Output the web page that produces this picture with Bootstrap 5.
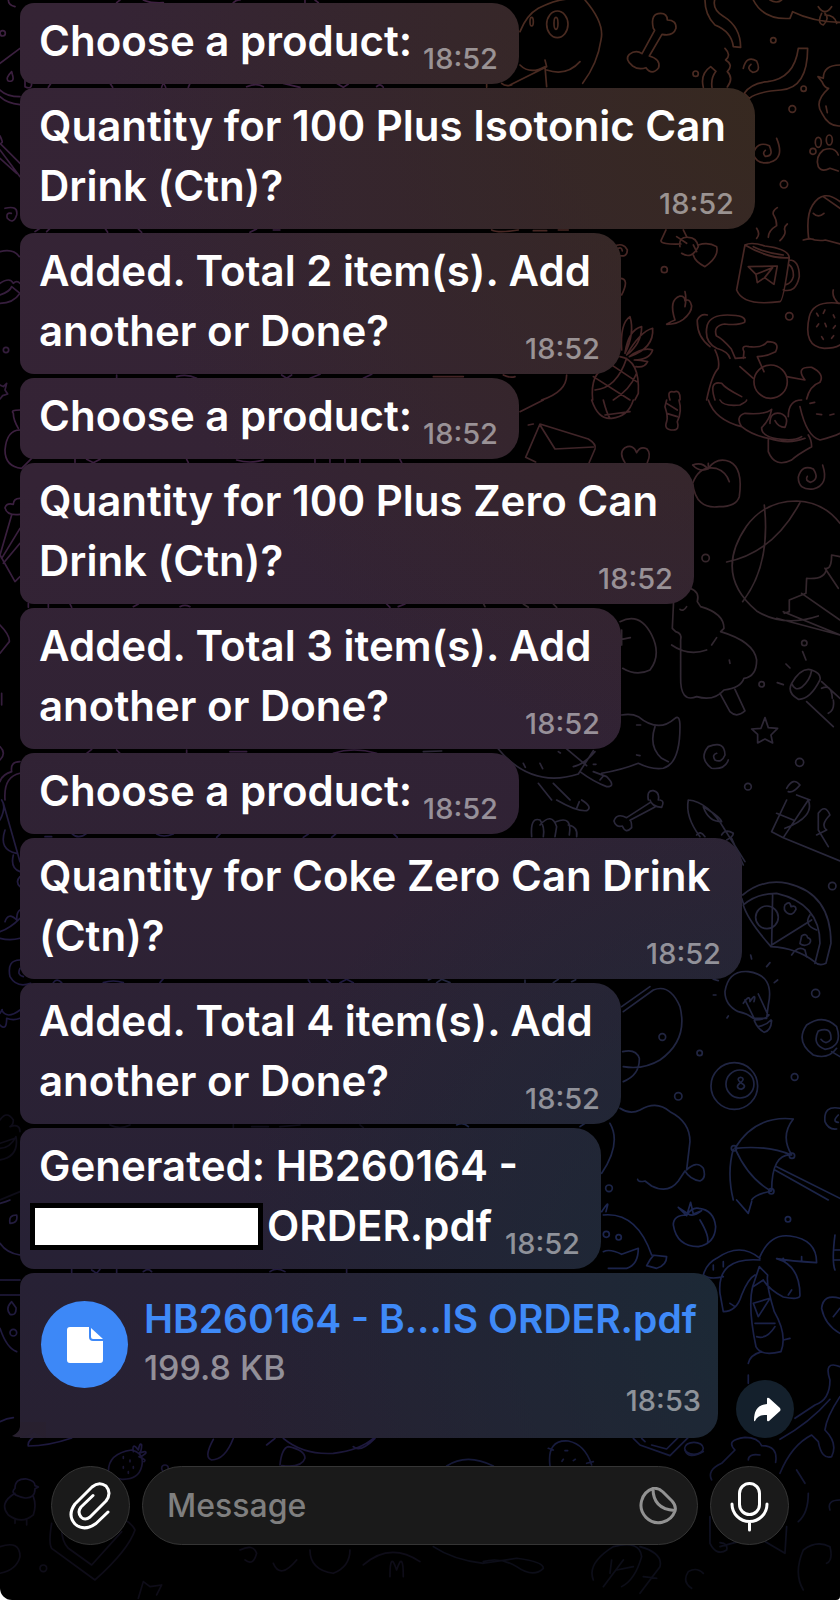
<!DOCTYPE html>
<html lang="en">
<head>
<meta charset="utf-8">
<meta name="viewport" content="width=device-width, initial-scale=1">
<title>Order bot chat</title>
<link href="https://cdn.jsdelivr.net/npm/bootstrap@5.3.0/dist/css/bootstrap.min.css" rel="stylesheet">
<style>
  body { background: #fff; font-family: Inter, "Liberation Sans", sans-serif; }
  .chat-screen { background: #000; border-radius: 0 0 4px 12px; overflow: hidden; }
  .wallpaper { position: absolute; top: 0; left: 0; width: 100%; height: 100%; fill: none; stroke-width: 5; stroke-linecap: round; stroke-linejoin: round; }
  .messages { padding: 3px 46px 0 20px; gap: 4px; }
  .bubble {
    max-width: 100%;
    padding: 8px 21px 13px 19px;
    border-radius: 14px 27px 27px 14px;
    color: #fff;
    font-size: 42px; font-weight: 600; line-height: 60px;
    background:
      radial-gradient(circle at 94% 6%, #37291f 0, #38262600 680px) fixed,
      radial-gradient(circle at 96% 82%, #1a2a36 0, #1e273700 580px) fixed,
      linear-gradient(#352435 0, #342335 30%, #2f2234 55%, #272135 78%, #28202f 100%) fixed;
  }
  .sent-time { font-size: 29px; font-weight: 500; line-height: 24px; color: #ffffff80; }
  .bubble-sm { width: 499px; }
  .bubble-md { width: 601px; }
  .bubble-lg { width: 674px; }
  .bubble-xl { width: 735px; }
  .bubble-coke { width: 722px; }
  .bubble-generated { width: 581px; }
  .redacted { width: 233px; height: 47px; margin: 7px 0 0 -9px; border: 5px solid #000; background: #fff; }
  .file-bubble { width: 698px; height: 165px; padding: 22px 17px 0 21px; border-radius: 14px 24px 24px 0; }
  .file-badge { width: 87px; height: 87px; margin-top: 6px; background: #3d88f7; }
  .file-name { font-size: 39px; line-height: 48px; color: #3f8af8; text-decoration: none; }
  .file-size { font-size: 34px; font-weight: 500; line-height: 42px; color: #ffffff80; }
  .tail { position: absolute; left: -8px; bottom: 0; }
  .forward { width: 58px; height: 58px; background: #14202c; margin-left: 18px; }
  .composer { padding: 28px 51px 55px; gap: 12px; }
  .round-control, .message-box { height: 79px; background: #1a1a1a; border: 1px solid #353535; color: #fff; }
  .round-control { width: 79px; }
  .message-box { min-width: 0; border-radius: 40px; padding: 0 20px 0 24px; }
  .message-box input { font-size: 32px; font-weight: 500; color: #fff; outline: 0; min-width: 0; }
  .message-box input::placeholder { color: #7f7f7f; opacity: 1; }
</style>
</head>
<body>
<main class="chat-screen position-relative min-vh-100 d-flex flex-column">
  <svg class="wallpaper" viewBox="0 0 840 1600" preserveAspectRatio="xMidYMid slice" aria-hidden="true">
    <defs>
      <linearGradient id="r1" gradientUnits="userSpaceOnUse" x1="0" y1="0" x2="0" y2="1200"><stop stop-color="#4a2b20"/><stop offset="1" stop-color="#452426"/></linearGradient>
      <linearGradient id="r2" gradientUnits="userSpaceOnUse" x1="0" y1="0" x2="0" y2="1200"><stop stop-color="#432427"/><stop offset=".5" stop-color="#33272d"/><stop offset="1" stop-color="#2a273a"/></linearGradient>
      <linearGradient id="r3" gradientUnits="userSpaceOnUse" x1="0" y1="0" x2="0" y2="1200"><stop stop-color="#2a2738"/><stop offset="1" stop-color="#1b2448"/></linearGradient>
      <linearGradient id="r4" gradientUnits="userSpaceOnUse" x1="0" y1="0" x2="0" y2="1200"><stop stop-color="#1c2650"/><stop offset=".6" stop-color="#181c40"/><stop offset=".9" stop-color="#0c0d18"/></linearGradient>
      <linearGradient id="l1" gradientUnits="userSpaceOnUse" x1="0" y1="0" x2="0" y2="1200"><stop stop-color="#3d2040"/><stop offset="1" stop-color="#331d3c"/></linearGradient>
      <linearGradient id="l4" gradientUnits="userSpaceOnUse" x1="0" y1="0" x2="0" y2="1200"><stop stop-color="#231c3e"/><stop offset=".6" stop-color="#1e1940"/><stop offset=".8" stop-color="#0e0c18"/></linearGradient>
    </defs>

    <g transform="translate(420 0) scale(.3333)" stroke="url(#r1)">
      <path d="M495 0q60 70 48 120q-10 70-55 130M300 95q20-50 55-70q60-30 100-28M300 195q30 30 75 5l5 60M375 180l5 20l-110 55M380 210q60 20 100-25M200 250v12M245 250q10 10 30 5"/>
      <ellipse cx="412" cy="73" rx="32" ry="40"/><ellipse cx="408" cy="70" rx="6" ry="18"/><ellipse cx="335" cy="65" rx="5" ry="13"/>
      <path d="M700 85q-10-45 22-45q20 0 20 20q28 0 26 25q-8 25-42 18l-38 65q35 10 28 35q-20 25-38 0q-22 8-40-5q-25-20-10-35q20-15 38-2l38-70z"/>
      <path d="M855 0q0 45 30 75q50 20 55 65l22 2q0-60-50-92q-35-20-28-50M1000 0q30 60 110 55l8-20q60 30 142 32M1050 0q20 12 35 0M1195 20q20 30 40 0M1205 40q-15 30 5 35q20-20 5-35M1215 45q30 0 35 25"/>
      <path d="M1135 145h28q0 120-80 125q-70 5-95 25l-15-15q20-30 70-35q80-10 92-100M915 145q20 20 2 35q25 15 5 35q20 20 0 46M850 262q-10-40 22-62l16 14q-16 20-12 48M970 205q10-40 40-22q15 32-12 34q-20-12-5-24"/>
      <circle cx="1060" cy="121" r="8"/><circle cx="827" cy="221" r="8"/><circle cx="1151" cy="266" r="8"/><circle cx="1117" cy="327" r="10"/><circle cx="1092" cy="553" r="11"/><circle cx="733" cy="809" r="9"/><circle cx="1108" cy="949" r="11"/>
      <path d="M1260 195q-50 0-50 40l-16-5l12 15q8 20 20 20q-45 40-20 75q20 40 54 38M1218 318l4 20"/>
      <path d="M1070 415q25 60-20 72q-40 8-50-25q10-40 48-25q15 32-12 32q-10-10 0-18"/>
      <path d="M1195 500q-10-30 15-50q35-12 45 15M1195 500q10 18 35 5l25 8"/><ellipse cx="1195" cy="427" rx="9" ry="15"/><ellipse cx="1228" cy="420" rx="9" ry="15"/><circle cx="1179" cy="454" r="9"/>
      <path d="M1260 605q-50-40-82 10q-20 30-12 100q30 10 50 5l44 12M1180 640q15 15 32 0M1210 590l50 35M1150 720q20-5 30-2"/>
      <path d="M1010 715q12-12 0-30M1045 712q0-20 25-35q0-18-8-30t10-24M1080 722q20-20 14-32q-2-10 8-18"/>
      <path d="M975 735q20-10 60 3q70 8 73 35q-60 5-133-38l-25 135q20 50 130 35q10 0 28-132M1108 780q30 0 30 50q-10 50-48 40M1108 795q14 10 12 35q-5 20-22 24M985 800l87-2l-10 55l-28-20l-22 15l-4-25zM1008 823l50-20l-24 30M1000 740q40 20 90 25"/>
      <path d="M738 690l-15 32q0 12 60 10M780 740q-5-30 25-28q25 0 30 28q-20 40-50 20M835 735q30-10 55 5q8 30-35 60q-30-15-35-35M790 690l10 20M770 710l30 20M820 735l10 20M580 740q30-15 42 10q0 25-30 15M595 745q10-5 12 8M600 835q30 0 5 50"/>
      <path d="M765 960q-20-60 15-72q15 0 15 15q15-10 20 15q0 20-25 40q-20 15-50 15q15-10 25-13M795 875q5 20 0 45"/>
      <path d="M605 1050q-5-80 25-100q15 50-15 110q10-70 50-80q0 50-45 85q40-70 78-80q5 60-70 85q40-30 70-20q-10 30-55 30q20 0 40 5q-10 20-35 15M600 1070q60 10 55 110l-10 20M560 1100q-50 20-42 100M520 1130l110 70M560 1085l90 60M620 1075q-30 90-95 95M650 1120q-20 50-70 80"/>
      <path d="M1240 870q-5 20 15 40M1260 910q-80-10-92 40q-20 90 45 95q30 0 47-10"/><path d="M1190 940l5 8M1215 930l-5 10M1240 945l4 8M1190 980l6-8M1215 970l4 10M1240 985l6-8M1205 1010l5 8M1235 1015l6-8"/>
      <path d="M930 1075q-5-20-40-30q-40-20-28-70q10-30 60-30q60 0 52 22q-20 10-60 5q-35 5-25 35q20 10 45 40l12 28l30-2M870 1040q-40-30-38-80q10-20 30-15M970 1075l2-20q-10-20 15-15q40 5 55-15q40 0 25 30q-30 15-55 15l20 45M895 1105q-20 20-35 95M885 1050q15 30 10 55M960 1100l40 35M885 1200q-20-60 20-50q10 15 60 40M1100 1130l55 10q-30-40 20-38q40 20 25 45q-30 10-40 50"/><circle cx="1052" cy="1145" r="50"/>
      <path d="M750 1200q-10-30 12-24q20-8 18 24M440 1125q0 50-75 75M215 690q20 10 80 0M415 690h30M340 692h40M40 1130h90M250 1125q20 10 35 5"/>
    </g>

    <g transform="translate(420 400) scale(.3333)" stroke="url(#r2)">
      <path d="M515 0q20 60 60 55q50-5 65-55M555 45l75-10M550 0q10 40 20 55M740 0l-5 20q10 30 5 45q-10 25 20 25q20 0 12-25q15-30 5-65M740 10l32 20M740 40l32 10M300 35l70-35M325 75l15-3"/>
      <path d="M360 72l145 45q25 15 20 30l-18 42M360 72l-43 100l30 14M360 75l45 72l115-6M615 188q-20-30 0-45q25-12 35 15q10-20 30-12q15 15 2 42"/>
      <path d="M865 0q20 60 100 80q30 25 80 35l0 40q20 50 70 25q15-15 60-40q0-20-10-35M900 0q10 20 60 15q20-10 20-15M965 80q-20-30 10-40q60 5 80-12q-5 30-30 55q0 30 60 35q40 5 60-8M1045 115q60 20 110 0M1050 70q0-35 30-30q30 10 15 42q-20 0-30-20M1105 50q0-50 40-50M1140 20q20 90 60 100q40-10 60-20M1190 42l15 2M1230 45l12-3M1170 10l14-3"/>
      <path d="M865 205q25-35 65-20q40 20 28 105q-10 30-60 30q-70 10-80-70q20-55 70-45q30 10 40 40M818 195q30-10 45 12q-25 10-45-12M865 190v16"/>
      <path d="M1208 195q20 60-28 72q-45 5-45-35q10-40 45-25q20 30-8 40q-18-5-10-18"/><circle cx="857" cy="474" r="11"/><circle cx="1153" cy="729" r="8"/><circle cx="1025" cy="853" r="8"/><circle cx="1139" cy="1087" r="12"/><circle cx="984" cy="1160" r="10"/>
      <path d="M1260 370q-50-65-130-67q-95 0-150 75q-100 145 30 255q80 50 185 15M1033 315q20 180-65 290M1140 308q-80 150-220 178M1260 470l-25-5q0 40-15 40q-5 35-60 30l-2 45l-50 20l0 35l-15 5M1215 505l40 60M1145 580l115 80M1090 635l170 70M1070 655l190 50"/>
      <path d="M810 565q30 10 22 40l10 15q70 20 70 65l-10 10q100 30 108 85q0 50-38 55q-10 30-60 35q-30 35-82 20q-50 20-48-60v-110q5-20-15-25l-10-10l5-105q-20 0-25-30M755 735q50 35 105 15M875 735l15-22M780 628q10 8 20-8M928 780l2 10M900 880l30 55q20 20 45-2l-30-65"/>
      <path d="M600 665q60-30 95 40q30 60-5 105q-40 20-82-5M605 690v45M605 718l26-5M605 945q30-5 50 5q60 50 110 5q15-12 15 25q0 110-50 125q-35 5-75-15q-50 20-110 30M705 980q-20 60 20 95l20 10M650 975h12M650 1065l10 2M235 1047q100 120 240 75l45-70M440 1047l60 50M460 1100q30-5 65-45M480 1115q40 30 80 45q30 0 0-30l-40-15M540 1140l10-12M355 1150l40 50M400 1150l50 50M310 1090l6 12M360 1090l8 16M415 1055l6 4M520 1093h8"/>
      <path d="M1035 953l10 30l28 2l-20 20l5 24l-23-12l-22 12v-26l-18-16l28-2zM925 1080q-10 30-50 25q-40-30-10-65q50-20 50 25q-10 25-30 15q-10-15 5-20"/>
      <path d="M1115 850q30-50 60-40q30 10 25 30q-30 60-65 58q-35-20-20-48q10 25 30 12q25-20 30-50M1160 905l80 75M1205 845l55 50M1205 865q30-15 32 30M1225 940q20-10 15-40M1148 755l10 25M1098 792l12 12M1072 848l18 6"/>
      <path d="M685 1200q-5-30 15-28q20 5 15 28M1100 1165q20-35 40-10q-20 25-35 20M1130 1185l40 15M10 1055l55-2M190 610l5 10M310 612l15 10M400 612l10 10"/>
    </g>

    <g transform="translate(420 800) scale(.3333)" stroke="url(#r3)">
      <path d="M410 0q60 35 90 32q20-10-15-32M470 25l8-20M335 110q-5-60 25-50q15 20 10 50M360 75q35-40 50 5l-5 30M408 65q50-20 40 40M445 75q30 5 25 35"/>
      <path d="M690 0q5 20 35 22q10-20-5-22M690 8l-70 45q-30-15-38 10q5 20 25 15q10 25 28 5q0-20-5-22l75-40"/>
      <path d="M805 0q-10 50 35 110M805 0q60 5 110 90l60 95M850 20q50 30 55 45q-40 0-55-45M830 105q10-15 25 5M905 105q10-20 35-5q0 10-20 20M935 115l35 80"/>
      <path d="M1100 0l-45 95l35 18l75-113M1090 113l170 70M1070 40l50 20M1195 40q20-30 35 5q-30 30-10 45q-20 10-30 15M1195 40v50l30 50M1165 0q20 50-70 85"/>
      <path d="M968 285q60-50 135-35q130 30 130 180l-15 60q-20 10-35-5q-50-40-130-45q-70-80-83-125q40-35 100-35q130 30 130 150l-15 60M1058 285l-3 150l120-75M970 310l-5-15"/><circle cx="1041" cy="352" r="34"/><path d="M1095 315q15-15 18 5q15-5 15 8q-10 20-25 12q-15-10-8-25M1145 408q15-10 18 5q15 5 5 18q-15 10-28 0zM1170 345q-20 30 20 45M1115 465q20-30 40-15l5 20"/>
      <path d="M1000 655q-20-15-45-20q-40-20-40-60q10-65 70-60q80 10 60 100l-5 40zM975 600l30 60M1015 582l30 65M970 610q20-30 20-5q20-30 12 0M1003 662q10 25 30 35q20-5 22-35M1005 660q30 0 42-15M1015 680q25-5 38-20M992 465l3 12M1050 488l-10 12M1073 540l-10 8M880 585h8M925 648l-4 6M880 538l15 4"/>
      <circle cx="1237" cy="258" r="11"/><circle cx="1187" cy="580" r="12"/><circle cx="839" cy="759" r="8"/><circle cx="1124" cy="831" r="10"/><circle cx="775" cy="889" r="11"/><circle cx="727" cy="711" r="10"/><circle cx="567" cy="1165" r="10"/>
      <circle cx="943" cy="858" r="70"/><circle cx="960" cy="852" r="42"/><path d="M962 848q-15-12 0-16q15 4 0 16q-20 15 2 20q20-10-2-20"/>
      <path d="M1250 745q-25 35-70 20q-55-40-20-90q50-35 90 5q20 60-35 68q-40-15-20-55q40-15 38 25q-15 20-30 0M1235 755l25 15M1260 925q-50-10-45 40q10 25 35 22M1255 945q-20 20 0 22"/>
      <path d="M610 635l90-65q50-20 80 50q25 100-60 160q-50 30-110 20M610 845q50-20 48-70q-10-30-50-20M690 560l-85 60M600 925q30 20 60 5q50-30 90 5q60 30 60 90l-10 85q30-30 50-5q10 30-10 38q-30-5-45-30l-20 30q-30 40-80 15l-20-15q-20 5-22-5M545 1120q60-90 25-150M480 980l15-10"/>
      <path d="M945 1045q60-100 175-88q-40 50-5 108q-60-5-60 108q-50 10-60 27M945 1045q100-10 168 20M945 1045q40 90 108 128M940 1048q-20 70 0 152M1065 1110l160 90M1070 1100l190 95"/><circle cx="942" cy="1045" r="8"/><circle cx="1116" cy="1067" r="8"/><circle cx="1054" cy="1174" r="8"/>
      <path d="M25 540l10-5M50 548l15-10l25 10M315 540v8M400 548l15-10M455 545l12-6M110 975q20-10 35 5"/>
    </g>

    <g transform="translate(420 1200) scale(.3333)" stroke="url(#r4)">
      <path d="M545 35q20-30 18-20l-5 20M550 45q100-10 145 120l45 5q0 25-30 35l-30-8q10-20 20-30M550 155q20-10 55 8l50-18q0 50-35 60h-55"/><circle cx="559" cy="103" r="9"/><circle cx="596" cy="112" r="8"/>
      <path d="M800 45q-40 0-40 30q10 65 75 65q50-10 52-60q-5-50-50-55q-20-5-37 20M840 60q30 50 22 70M775 22l25 25l12-40l8 35l25-10q-25 20-40 10zM950 0l35 40l10-35"/><circle cx="1104" cy="58" r="8"/>
      <path d="M1020 175q-60-50-130 0q-30 15-40 50q20 15 60 5M1020 180q-130-10-120 100l10 55q40 0 55-50q20-50 40-60M1020 170q30-70 90-62q80 10 80 80q-80-5-120-12q70 20 70 110q0 15-50 5q-40-20-60-50M1018 200l-20 60q-15 60 10 180q15 30 75 15q20-50-20-120q-25-80-20-110zM1000 260l30-20M1000 310l50-15l-35 55zM1005 370l60 0M1010 410q30 10 55-30M880 195v15M910 185v15M930 310l15 10M1090 175l5 10M1145 170v12M1105 285l10-15M1025 455q-35 10-40 35M985 525v25M1090 420l20-5"/>
      <path d="M1260 295q-50-15-55 30q10 50 55 75M1240 350l20-25M1245 105q-10 80 0 105M1245 150h15M1242 180h18"/>
      <path d="M1260 500q-50-20-30 40q0 60-45 75l-60 40M1230 598q-60 70-150 120M1260 590q-40 60-45 100q40 40 20 80q-30 10-40-45l-20-20q-60 30-95 115M875 840q-15-30 30-50l40-40q-30-30 30-38q40 0 50 25q50 0 42 50M985 780q0-20 35-15"/>
      <path d="M390 798q-10-80 55-75q50 10 70 72M385 745l15 5M500 790l20-5M435 752h8M430 778l-4 6M460 782l6-4M80 798q60-40 140 0M640 715l20 20l90 32l55-55M665 715l10 10M695 735l45 12l35-35"/><ellipse cx="822" cy="745" rx="28" ry="18"/><path d="M795 750q10 30 55 5"/>
      <path d="M1130 810l25 40M1165 880q0 60-30 85M870 950v80q20 40 50 20q5-20-20-22M900 1040l110-30l85 50l5-80M1260 900q-40 0-30 30M520 1140q-20-50 60-100q80-20 85 30q-20 70-60 90M550 1160l60-80M570 1120l5-40M590 1110l50-10M660 1040q70 20 60 60l-60 80M670 1130l40 5M850 1120q-20-20-45-5q-20 30 10 50M1150 1170q-30-50 0-120q40-30 80-10q10 40-10 50M40 1040q60 40 150 50l100-15q80 10 80 30q-30 30-80-5q-50-30-100-15"/>
    </g>

    <g transform="scale(.3333)" stroke="url(#l1)">
      <path d="M25 0q0 15 20 20M0 190l60-45M0 270q20 20 60 20M0 290q20 20 60 24M35 215q-20 20-10 28q20 5 12-20zM75 240v20q20 10 20-10M0 408q10 20 5 20M0 430l60 60M0 450l60 80M0 475l50 45M15 625q40-10 35 20q-10 30-28 10q-5-18 12-15M0 755q40-10 58 15M0 850q30-20 40 0q10-10 20 0M0 885q30-10 35-25l25 20q-20 30-60 30M0 1155l10 5l10-10l-5 20l8 12l-15 5l-8 10"/><circle cx="8" cy="100" r="8"/><circle cx="18" cy="1050" r="8"/>
      <path d="M350 8l10-8M430 0q20 10 60 8M700 8q10-10 20-8M915 8v-8M945 0l10 8M145 262l8-12M330 250l8 12M485 262q5-20 12 0M565 262l5-12M740 260q30-12 50 0M850 250l50 12M1010 250l20 12l15-10M1130 260q10-12 20 2M105 695l15-10M140 695l10-10M315 685l8 12M415 687l10 10M750 697l20-10M820 690h20M350 1125v10M530 1130q30-10 60 5M845 1125l15 10l15-10M930 1135l30-12M1090 1135l25-12"/>
    </g>
    <g transform="translate(0 400) scale(.3333)" stroke="url(#l1)">
      <path d="M60 30q-30 0-20 10q0 20 15 45M60 90q-40 0-45 60q0 50 50 55l30-30M60 295q-20 0-20 18q-20-5-25 10q5 25 45 20M35 345l-35 120l45 80l15-15M60 385l-55 90M60 430l-50 60M0 675q30 30 28 50l-28 35M5 880v35M0 1040q20 20 0 40M60 1085q-30 0-25 30q-30 10-35 30M15 1200q-5-70 45-80M225 175v12M260 178l20 10l20-10M560 178l5 10M710 180q40 12 80 0M945 175v12M990 175v12M1035 175v12M1080 178v10M1200 178l5 10M85 610v12M145 612v10M210 612l5 10M400 620l15-8M540 620q15-8 30 0M1160 612l10 10M1195 620l20-8M260 1060l15-12M350 1050l10 10M560 1050v8M690 1055h50M1000 1060q60-20 130 0"/>
    </g>
    <g transform="translate(0 800) scale(.3333)" stroke="url(#l4)">
      <path d="M0 60q20-40 5-60M10 10l50 175M15 90q-20 60 35 70M40 165q-10 40 20 50M60 230q-15 15 0 30M15 365q10-30 35-5q0-25 10-30M0 395q30-10 60-40M0 415q30 8 60 0M60 480q-40 0-30 50q20 35 62 20M60 505q-10 20 10 25M0 640q10-15 5-10q15 30 55 0M0 675q20 20 20-20q20 8 40 0M0 960q20-30 40 0q0 15-10 20q30-10 30 15M0 1045q30 0 48-35q10 60-48 70M0 1030l45-15M0 1200l60-25"/>
      <path d="M135 110h20M215 100q20 20 45 0M470 102q20 12 50 0M650 112l12-12M910 112l15-10M995 112l12-10M1180 100l12 12M160 548q10-15 25 0M310 548q30-10 60 0M480 548l10-12M925 540l5 8M980 540l10 8M1020 548l20-10l20 10M330 975q30 15 60 0M700 982v-8M755 980h50M840 980l60-5M1080 975l10 8"/>
    </g>
    <g transform="translate(0 1200) scale(.3333)" stroke="url(#l4)">
      <path d="M0 10q20-5 30-10M30 70q-5-25 20-25q5 25-20 25M0 130q20 30 60 35M0 240h60M0 285l60 0M35 305q-20 20-5 38q20 5 18-20zM0 385q20 60 50 70M0 665q20-10 40-12M120 700q-40 20-35 38q60 0 130-24M215 208v10M275 210l15 10l10-12M350 208v10M430 215q15-12 25 0M810 215q20-15 45 0M1040 208v10"/><circle cx="40" cy="398" r="10"/>
      <path d="M640 718q-30 55-5 62q40 0 65-65M800 735l25-20M850 715q60 50 150 45q80-10 120-45M840 795q5-50 25-55q50 10 50 35q-10 30-70 22M1060 740q20 20 65-25M325 815q0-55 70-65q40 10 30 50q-10 40-60 38q-20-5-30-15M400 755q-5-30 15-5q5-25 10-15q0 20-8 25q25-10 20 0q-10 10-20 10q25 10 15 15M370 770v5M390 780v5M370 800v5M400 800v5M385 815v5"/>
      <path d="M45 865q0-30 35-28q25 5 25 20l10 4l-10 5q0 30-30 28q-50-10-30-29M45 880q-50 30-20 65q40 30 75 0q10-30 0-55M45 960v10M80 960v15M155 970q-10 60 0 75l130 95q100-90 120-150q-10-20-30-30M185 985q0 40 20 60l70 50l90-100M0 1040q60-20 60 30q-10 40-60 50M415 1195l15-50l20 15l35-5l-15 30M720 1050q40-20 50 10q-10 40-35 20M820 1090q20 50 70-10M930 1050q0 60 70 70q50-20 50-70M1090 1095q80-70 170-10M1170 1130q0-80 20-20q20-60 20 20"/>
      <circle cx="495" cy="805" r="10"/><circle cx="130" cy="1105" r="10"/>
    </g>
  </svg>

  <section class="messages position-relative d-flex flex-column align-items-start" aria-label="Messages">
    <article class="bubble bubble-sm d-flex justify-content-between align-items-end">
      <span>Choose a product:</span><time class="sent-time">18:52</time>
    </article>
    <article class="bubble bubble-xl">
      <div class="text-nowrap">Quantity for 100 Plus Isotonic Can</div>
      <div class="d-flex justify-content-between align-items-end"><span>Drink (Ctn)?</span><time class="sent-time">18:52</time></div>
    </article>
    <article class="bubble bubble-md">
      <div class="text-nowrap">Added. Total 2 item(s). Add</div>
      <div class="d-flex justify-content-between align-items-end"><span>another or Done?</span><time class="sent-time">18:52</time></div>
    </article>
    <article class="bubble bubble-sm d-flex justify-content-between align-items-end">
      <span>Choose a product:</span><time class="sent-time">18:52</time>
    </article>
    <article class="bubble bubble-lg">
      <div class="text-nowrap">Quantity for 100 Plus Zero Can</div>
      <div class="d-flex justify-content-between align-items-end"><span>Drink (Ctn)?</span><time class="sent-time">18:52</time></div>
    </article>
    <article class="bubble bubble-md">
      <div class="text-nowrap">Added. Total 3 item(s). Add</div>
      <div class="d-flex justify-content-between align-items-end"><span>another or Done?</span><time class="sent-time">18:52</time></div>
    </article>
    <article class="bubble bubble-sm d-flex justify-content-between align-items-end">
      <span>Choose a product:</span><time class="sent-time">18:52</time>
    </article>
    <article class="bubble bubble-coke">
      <div class="text-nowrap">Quantity for Coke Zero Can Drink</div>
      <div class="d-flex justify-content-between align-items-end"><span>(Ctn)?</span><time class="sent-time">18:52</time></div>
    </article>
    <article class="bubble bubble-md">
      <div class="text-nowrap">Added. Total 4 item(s). Add</div>
      <div class="d-flex justify-content-between align-items-end"><span>another or Done?</span><time class="sent-time">18:52</time></div>
    </article>
    <article class="bubble bubble-generated">
      <div class="text-nowrap">Generated: HB260164 -</div>
      <div class="d-flex align-items-end">
        <span class="redacted align-self-start flex-shrink-0"></span><span class="ms-1">ORDER.pdf</span><time class="sent-time ms-auto">18:52</time>
      </div>
    </article>
    <div class="d-flex align-items-end">
      <article class="bubble file-bubble position-relative d-flex align-items-start">
        <svg class="tail" width="34" height="16" viewBox="0 0 34 16" fill="#28202f" aria-hidden="true"><path d="M8 0v5Q7 11 0 14Q10 18 22 10L34 16V0z"/></svg>
        <span class="file-badge rounded-circle d-flex align-items-center justify-content-center flex-shrink-0">
          <svg width="36" height="36" viewBox="0 0 36 36" fill="#fff" aria-hidden="true"><path d="M3 0h19v10q0 4 4 4h10v19q0 3-3 3H3q-3 0-3-3V3q0-3 3-3z"/><path d="M24 1l12 11H26q-2 0-2-2z"/></svg>
        </span>
        <div class="d-flex flex-column flex-grow-1 ms-3 text-nowrap">
          <a class="file-name mb-1" href="#">HB260164 - B...IS ORDER.pdf</a>
          <span class="file-size">199.8 KB</span>
          <time class="sent-time align-self-end">18:53</time>
        </div>
      </article>
      <button type="button" class="forward btn border-0 rounded-circle p-0 flex-shrink-0 d-flex align-items-center justify-content-center" aria-label="Forward">
        <svg width="58" height="58" viewBox="0 0 58 58" fill="#fff" aria-hidden="true"><path d="M31 19q0-2 2-1l11 10q1 2 0 3L33 41q-2 1-2-1v-5q-9-1-12 6q-1 1-1-1q0-15 13-16z"/></svg>
      </button>
    </div>
  </section>

  <form class="composer position-relative d-flex align-items-center">
    <button type="button" class="round-control btn rounded-circle p-0 flex-shrink-0" aria-label="Attach">
      <svg width="77" height="77" viewBox="0 0 77 77" fill="none" stroke="#fff" stroke-width="3" stroke-linecap="round" stroke-linejoin="round" aria-hidden="true"><path d="M56 45L44 56.500Q32 65 23 57Q15 48 23 37L40 20Q47 14 54 19Q60 26 54 34L38 50Q33 54 29 50Q25 45 29 40L41 28.500"/></svg>
    </button>
    <div class="message-box d-flex align-items-center flex-grow-1">
      <input type="text" class="w-100 border-0 bg-transparent p-0" placeholder="Message" aria-label="Message">
      <button type="button" class="btn border-0 p-0 flex-shrink-0 d-flex" aria-label="Stickers">
        <svg width="38" height="38" viewBox="0 0 38 38" fill="none" stroke="#929292" stroke-width="3" stroke-linecap="round" stroke-linejoin="round" aria-hidden="true"><path d="M14 1.500Q19 .5 24 5L33 14Q37.500 19 36 24A17.500 17.500 0 1 1 14 1.500Q14 22 35.500 23.500"/></svg>
      </button>
    </div>
    <button type="button" class="round-control btn rounded-circle p-0 flex-shrink-0" aria-label="Record voice message">
      <svg width="77" height="77" viewBox="0 0 77 77" fill="none" stroke="#fff" stroke-width="3" stroke-linecap="round" aria-hidden="true"><rect x="28.500" y="16.500" width="20" height="31" rx="10"/><path d="M21 37a17.500 17.500 0 0 0 35 0M38.500 55v8"/></svg>
    </button>
  </form>
</main>
<script src="https://cdn.jsdelivr.net/npm/bootstrap@5.3.0/dist/js/bootstrap.bundle.min.js"></script>
</body>
</html>
